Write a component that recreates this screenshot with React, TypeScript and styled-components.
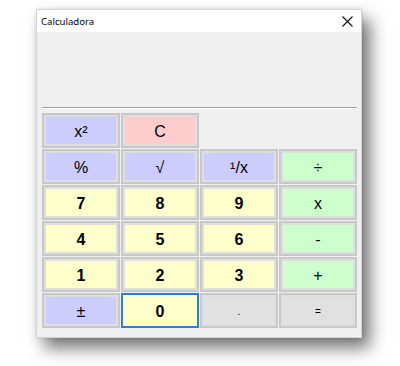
import React from "react"
import styled, { createGlobalStyle } from "styled-components"

type Tone = "blue" | "red" | "yellow" | "green" | "gray"

interface Key {
  label: string
  tone: Tone
  bold?: boolean
  small?: boolean
  focused?: boolean
}

const tones: Record<Tone, string> = {
  blue: "#ccccff",
  red: "#ffcccc",
  yellow: "#ffffcc",
  green: "#ccffcc",
  gray: "#e1e1e1",
}

const keys: (Key | null)[] = [
  { label: "x²", tone: "blue" },
  { label: "C", tone: "red" },
  null,
  null,
  { label: "%", tone: "blue" },
  { label: "√", tone: "blue" },
  { label: "¹/x", tone: "blue" },
  { label: "÷", tone: "green" },
  { label: "7", tone: "yellow", bold: true },
  { label: "8", tone: "yellow", bold: true },
  { label: "9", tone: "yellow", bold: true },
  { label: "x", tone: "green" },
  { label: "4", tone: "yellow", bold: true },
  { label: "5", tone: "yellow", bold: true },
  { label: "6", tone: "yellow", bold: true },
  { label: "-", tone: "green" },
  { label: "1", tone: "yellow", bold: true },
  { label: "2", tone: "yellow", bold: true },
  { label: "3", tone: "yellow", bold: true },
  { label: "+", tone: "green" },
  { label: "±", tone: "blue" },
  { label: "0", tone: "yellow", bold: true, focused: true },
  { label: ".", tone: "gray", small: true },
  { label: "=", tone: "gray", small: true },
]

export default function App() {
  return (
    <>
      <GlobalStyle />
      <Page>
        <Window>
          <TitleBar>
            <Title>Calculadora</Title>
            <CloseButton aria-label="Fechar">
              <svg width="11" height="11" viewBox="0 0 11 11">
                <path d="M0.5 0.5 L10.5 10.5 M10.5 0.5 L0.5 10.5" stroke="#111" strokeWidth="1.1" />
              </svg>
            </CloseButton>
          </TitleBar>
          <Body>
            <Display />
            <Separator />
            <Keypad>
              {keys.map((k, i) =>
                k ? (
                  <KeyButton key={i} $bg={tones[k.tone]} $bold={k.bold} $small={k.small} $focused={k.focused}>
                    {k.label}
                  </KeyButton>
                ) : (
                  <span key={i} />
                )
              )}
            </Keypad>
          </Body>
        </Window>
      </Page>
    </>
  )
}

const GlobalStyle = createGlobalStyle`
  body {
    margin: 0;
    background: #fff;
  }
`

const Page = styled.div`
  box-sizing: border-box;
  min-height: 366px;
  padding: 9px 0 0 36px;
`

const Window = styled.div`
  width: 326px;
  height: 329px;
  box-sizing: border-box;
  display: flex;
  flex-direction: column;
  background: #f0f0f0;
  border: 1px solid #d4d4d4;
  box-shadow: 8px 10px 16px rgba(0, 0, 0, 0.55), 0 0 4px rgba(0, 0, 0, 0.12);
`

const TitleBar = styled.div`
  height: 22px;
  display: flex;
  align-items: center;
  justify-content: space-between;
  background: #fff;
  padding: 0 0 0 4px;
`

const Title = styled.span`
  font-family: "Noto Sans", "Open Sans", sans-serif;
  font-size: 9.6px;
  color: #000;
`

const CloseButton = styled.button`
  width: 28px;
  height: 22px;
  border: 0;
  padding: 0;
  margin-right: 0;
  background: transparent;
  display: flex;
  align-items: center;
  justify-content: center;
`

const Body = styled.div`
  flex: 1;
  display: flex;
  flex-direction: column;
  padding: 0 4px 0 5px;
`

const Display = styled.div`
  height: 75px;
`

const Separator = styled.div`
  border-top: 1px solid #a0a0a0;
  border-bottom: 1px solid #ffffff;
  margin-bottom: 4px;
`

const Keypad = styled.div`
  display: grid;
  grid-template-columns: repeat(4, 78px);
  grid-auto-rows: 35px;
  gap: 1px;
`

const KeyButton = styled.button<{ $bg: string; $bold?: boolean; $small?: boolean; $focused?: boolean }>`
  box-sizing: border-box;
  margin: 0;
  padding: 2px 0 0;
  background: ${(p) => p.$bg};
  border: 2px solid ${(p) => (p.$focused ? "#2b7fd6" : "#c8c8c8")};
  box-shadow: ${(p) => (p.$focused ? "none" : "inset 0 0 0 2px #dedede")};
  font-family: "Liberation Sans", Arial, sans-serif;
  font-size: ${(p) => (p.$small ? "10px" : "16px")};
  font-weight: ${(p) => (p.$bold ? 700 : 400)};
  color: #000;
  display: flex;
  align-items: center;
  justify-content: center;
`
